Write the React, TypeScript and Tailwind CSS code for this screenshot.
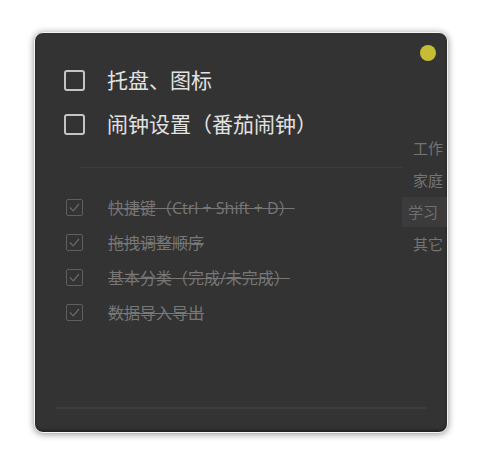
import React from 'react';

const font = { fontFamily: '"Open Sans", "Noto Sans CJK SC", sans-serif' };

const todos = ['托盘、图标', '闹钟设置（番茄闹钟）'];
const done = ['快捷键（Ctrl + Shift + D）', '拖拽调整顺序', '基本分类（完成/未完成）', '数据导入导出'];
const categories = ['工作', '家庭', '学习', '其它'];

const CheckedBox: React.FC = () => (
  <svg width="17" height="17" viewBox="0 0 17 17" className="shrink-0">
    <rect x="0.5" y="0.5" width="16" height="16" rx="1.5" fill="none" stroke="#5f5f5f" />
    <polyline points="4,8.5 7.2,11.8 13,5" fill="none" stroke="#6a6a6a" strokeWidth="1.2" />
  </svg>
);

const App: React.FC = () => {
  return (
    <div className="w-[480px] h-[463px] bg-white pt-[32px] pl-[34px]" style={font}>
      <div className="relative w-[414px] h-[401px] rounded-[9px] border border-[#f4f4f4] bg-[#333333] shadow-[0_1px_7px_rgba(0,0,0,0.45),inset_0_-2px_3px_rgba(0,0,0,0.35)] flex flex-col overflow-hidden">
        <div className="absolute right-[11px] top-[12px] w-[16px] h-[16px] rounded-full bg-[#c6bd34]" />

        <div className="flex flex-1">
          <div className="flex-1 pt-[25px]">
            {todos.map((t) => (
              <div key={t} className="h-[44px] flex items-center pl-[29px]">
                <span className="w-[21px] h-[21px] rounded-[3px] border-2 border-[#c4c4c4] shrink-0" />
                <span className="ml-[22px] text-[21px] text-[#e2e2e2] leading-none">{t}</span>
              </div>
            ))}
            <div className="ml-[45px] mt-[21px] h-px bg-[#3d3d3d]" />
            <div className="mt-[22px]">
              {done.map((t) => (
                <div key={t} className="h-[35px] flex items-center pl-[31px]">
                  <CheckedBox />
                  <span className="ml-[25px] text-[16px] text-[#777777] line-through leading-none">{t}</span>
                </div>
              ))}
            </div>
          </div>

          <div className="w-[45px] pt-[100px] flex flex-col gap-[2px]">
            {categories.map((c) => (
              <div
                key={c}
                className={
                  c === '学习'
                    ? 'h-[30px] flex items-center pl-[6px] bg-[#3b3b3b] text-[15px] text-[#6f6f6f] whitespace-nowrap'
                    : 'h-[30px] flex items-center pl-[11px] text-[15px] text-[#747474] whitespace-nowrap'
                }
              >
                {c}
              </div>
            ))}
          </div>
        </div>

        <div className="mx-[21px] mb-[23px] h-[2px] bg-[#3e3e3e]" />
      </div>
    </div>
  );
};

export default App;
